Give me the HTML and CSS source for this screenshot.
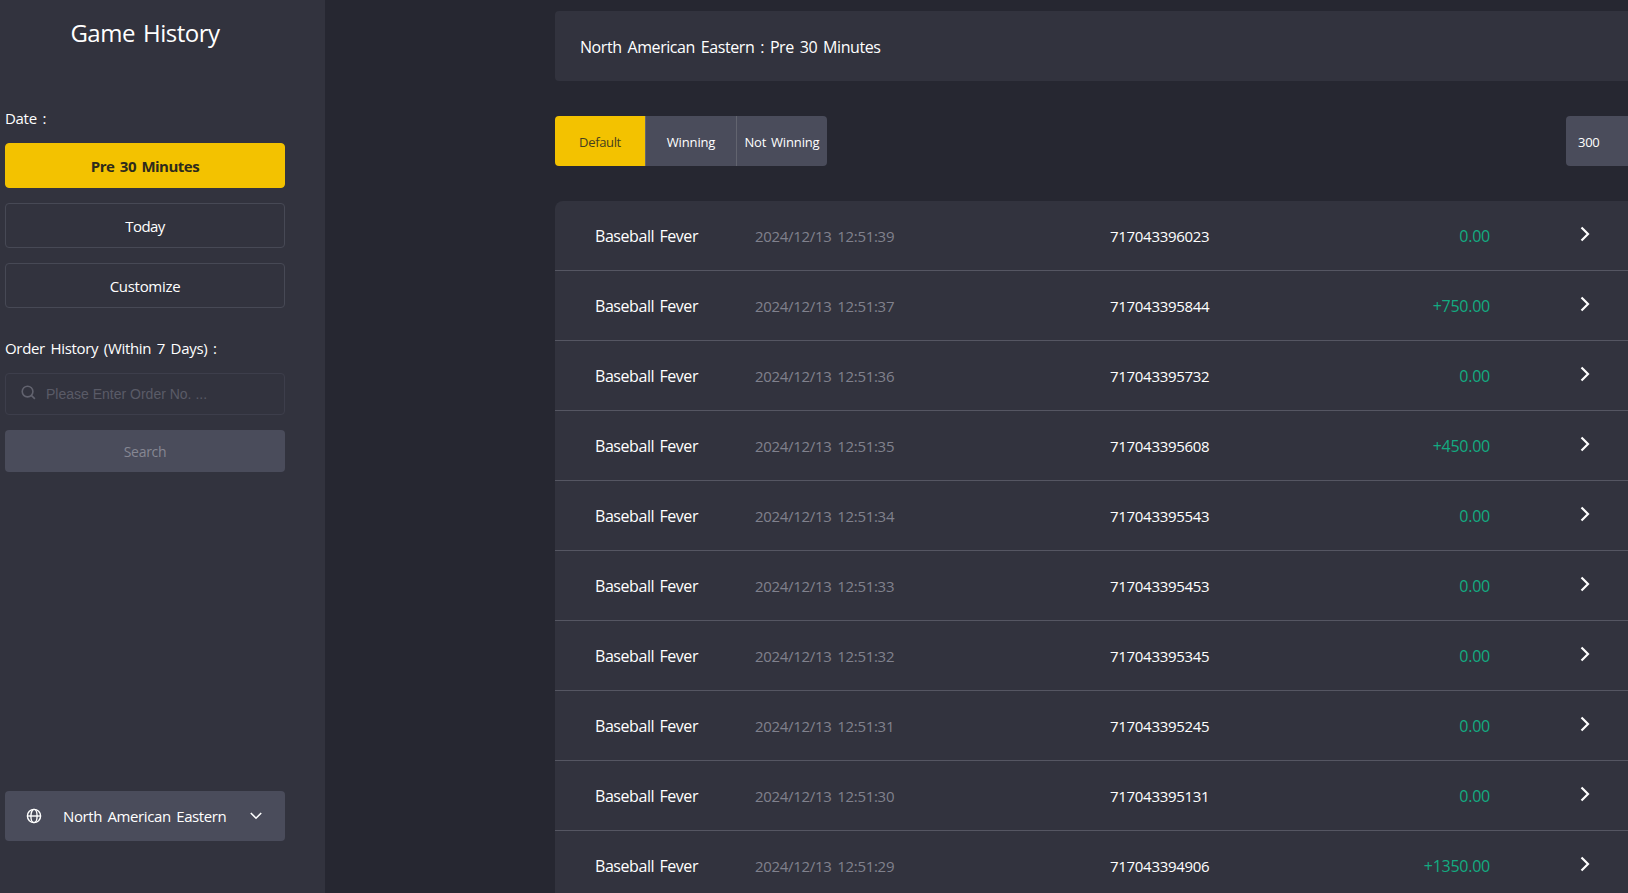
FILE: index.html
```html
<!DOCTYPE html>
<html lang="en">
<head>
    <meta charset="UTF-8">
    <meta name="viewport" content="width=device-width, initial-scale=1.0">
    <title>Game History</title>
    <link rel="stylesheet" href="styles.css">
</head>
<body>
    <aside class="sidebar">
        <h1>Game History</h1>

        <div class="label">Date :</div>
        <button class="date-btn active">Pre 30 Minutes</button>
        <button class="date-btn today">Today</button>
        <button class="date-btn">Customize</button>

        <div class="label order-label">Order History (Within 7 Days) :</div>
        <div class="order-input">
            <svg width="15" height="15" viewBox="0 0 16 16" fill="none" stroke="currentColor" stroke-width="1.7">
                <circle cx="7" cy="7" r="5.7"/>
                <path d="M11 11l3.800 3.800"/>
            </svg>
            <input type="text" placeholder="Please Enter Order No. ...">
        </div>
        <button class="search-btn">Search</button>

        <div class="timezone">
            <svg width="16" height="16" viewBox="0 0 16 16" fill="none" stroke="currentColor" stroke-width="1.400">
                <circle cx="8" cy="8" r="6.6"/>
                <ellipse cx="8" cy="8" rx="3.1" ry="6.6"/>
                <path d="M1.4 8h13.2"/>
            </svg>
            <span>North American Eastern</span>
            <svg width="12" height="8" viewBox="0 0 12 8" fill="none" stroke="currentColor" stroke-width="1.6">
                <path d="M.8 1l5.2 5.2L11.2 1"/>
            </svg>
        </div>
    </aside>

    <main class="content">
        <div class="summary">North American Eastern : Pre 30 Minutes</div>

        <div class="toolbar">
            <div class="tabs">
                <button class="tab active">Default</button>
                <button class="tab">Winning</button>
                <button class="tab not-winning">Not Winning</button>
            </div>
            <div class="page-size">300</div>
        </div>

        <div class="list" id="list"></div>
    </main>

    <script>
        const records = [
            ['12:51:39', '717043396023', '0.00'],
            ['12:51:37', '717043395844', '+750.00'],
            ['12:51:36', '717043395732', '0.00'],
            ['12:51:35', '717043395608', '+450.00'],
            ['12:51:34', '717043395543', '0.00'],
            ['12:51:33', '717043395453', '0.00'],
            ['12:51:32', '717043395345', '0.00'],
            ['12:51:31', '717043395245', '0.00'],
            ['12:51:30', '717043395131', '0.00'],
            ['12:51:29', '717043394906', '+1350.00']
        ];

        document.getElementById('list').innerHTML = records.map(([time, order, amount]) => `
            <div class="row">
                <span class="game">Baseball Fever</span>
                <span class="time">2024/12/13 ${time}</span>
                <span class="order">${order}</span>
                <span class="amount">${amount}</span>
                <svg class="arrow" width="10" height="16" viewBox="0 0 10 16" fill="none" stroke="currentColor" stroke-width="2.2">
                    <path d="M1.5 1.5L8 8l-6.5 6.5"/>
                </svg>
            </div>
        `).join('');
    </script>
</body>
</html>
```
FILE: styles.css
```css
:root {
    --bg: #262731;
    --panel: #32333e;
    --control: #4a4c5b;
    --line: #555662;
    --accent: #f3c200;
    --green: #12ab81;
}

* {
    box-sizing: border-box;
}

body {
    margin: 0;
    height: 100vh;
    display: flex;
    overflow: hidden;
    background: var(--bg);
    color: #fff;
    font-family: "Open Sans", "Noto Sans", sans-serif;
    font-size: 15px;
}

button {
    font: inherit;
    letter-spacing: inherit;
    word-spacing: inherit;
    color: inherit;
    border: none;
    padding: 0;
    cursor: pointer;
}

/* Sidebar */
.sidebar {
    width: 325px;
    flex-shrink: 0;
    padding: 0 40px 52px 5px;
    display: flex;
    flex-direction: column;
    background: var(--panel);
    letter-spacing: -0.3px;
    word-spacing: 2px;
}

h1 {
    margin: 15px 0 0;
    font-size: 24px;
    font-weight: 400;
    line-height: 36px;
    text-align: center;
    letter-spacing: -0.5px;
    word-spacing: 2.5px;
}

.label {
    margin-top: 55px;
    line-height: 24px;
}

.date-btn {
    height: 45px;
    margin-top: 15px;
    flex-shrink: 0;
    background: none;
    border: 1px solid #474955;
    border-radius: 4px;
}

.label + .date-btn {
    margin-top: 13px;
}

.date-btn.active {
    background: var(--accent);
    border-color: var(--accent);
    color: #2d2a1c;
    font-weight: 700;
    letter-spacing: -0.5px;
}

.date-btn.today {
    letter-spacing: -0.6px;
}

.order-label {
    margin-top: 28px;
    letter-spacing: -0.32px;
}

.order-input {
    height: 42px;
    margin-top: 13px;
    padding: 0 15px;
    display: flex;
    align-items: center;
    gap: 10px;
    border: 1px solid #3d3e4b;
    border-radius: 4px;
    color: #62636f;
}

.order-input svg {
    margin-bottom: 3px;
    flex-shrink: 0;
}

.order-input input {
    flex: 1;
    min-width: 0;
    padding: 0;
    border: none;
    outline: none;
    background: none;
    color: #fff;
    font-family: "Liberation Sans", Arial, sans-serif;
    font-size: 14px;
}

.order-input input::placeholder {
    color: #5a5b67;
}

.search-btn {
    height: 42px;
    margin-top: 15px;
    flex-shrink: 0;
    background: var(--control);
    border-radius: 4px;
    color: #868793;
    font-size: 14px;
}

.timezone {
    height: 50px;
    margin-top: auto;
    padding: 0 23px 0 21px;
    display: flex;
    align-items: center;
    background: var(--control);
    border-radius: 4px;
}

.timezone span {
    flex: 1;
    margin-left: 21px;
    letter-spacing: -0.4px;
}

/* Content runs past the right edge of the window */
.content {
    width: 1108px;
    flex-shrink: 0;
    margin-left: 230px;
    padding-top: 11px;
}

.summary {
    height: 70px;
    padding-left: 25px;
    line-height: 72px;
    background: var(--panel);
    border-radius: 4px;
    font-size: 16px;
    letter-spacing: -0.43px;
    word-spacing: 2.2px;
}

.toolbar {
    margin: 35px 0;
    display: flex;
    justify-content: space-between;
}

.tabs {
    display: flex;
    border-radius: 4px;
    overflow: hidden;
}

.tab {
    width: 91px;
    height: 50px;
    padding-top: 2px;
    background: var(--control);
    border-left: 1px solid #62646f;
    font-size: 13px;
    letter-spacing: -0.15px;
}

.tab.active {
    width: 90px;
    background: var(--accent);
    border-left: none;
    color: #45401f;
    letter-spacing: -0.35px;
}

.tab.not-winning {
    word-spacing: 1.5px;
}

.page-size {
    width: 97px;
    height: 50px;
    padding-left: 12px;
    line-height: 52px;
    background: var(--control);
    border-radius: 4px;
    font-size: 13px;
    letter-spacing: -0.3px;
}

.list {
    background: var(--panel);
    border-radius: 8px 8px 0 0;
}

.row {
    height: 70px;
    padding-left: 40px;
    display: grid;
    grid-template-columns: 160px 355px 200px 180px 1fr;
    align-items: center;
    border-bottom: 1px solid var(--line);
}

.game {
    font-size: 16px;
    letter-spacing: -0.43px;
    word-spacing: 1.5px;
}

.time {
    color: #80818d;
    letter-spacing: -0.3px;
    word-spacing: 2px;
}

.order {
    letter-spacing: -0.3px;
}

.amount {
    color: var(--green);
    font-size: 16px;
    letter-spacing: -0.25px;
    text-align: right;
}

.arrow {
    margin: 0 0 3px 90px;
}
```
